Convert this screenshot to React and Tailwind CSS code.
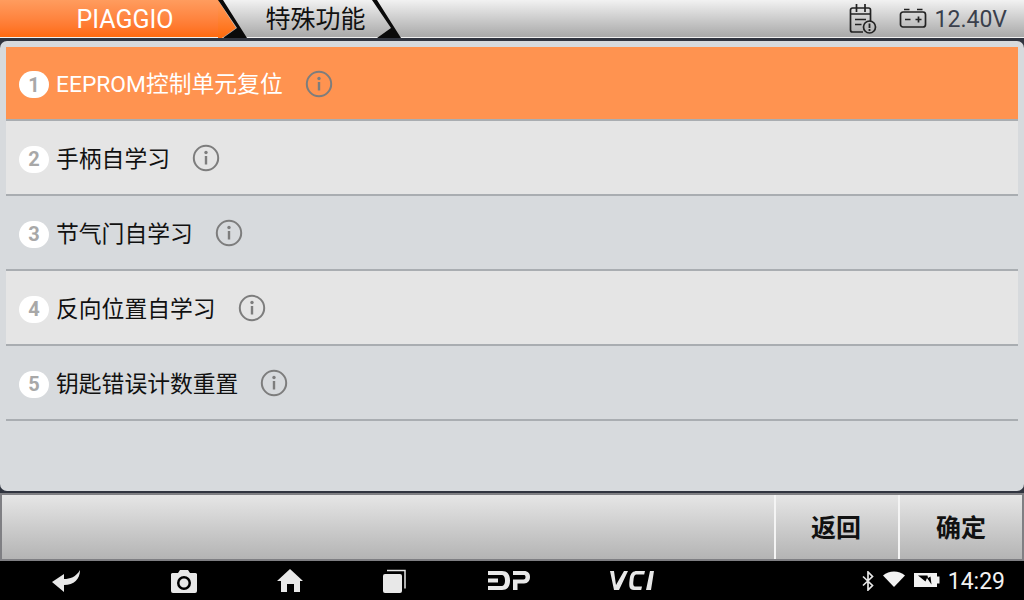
const CJK = '[font-family:Roboto,"Noto_Sans_CJK_SC",sans-serif]';

const items = [
  { label: 'EEPROM控制单元复位' },
  { label: '手柄自学习' },
  { label: '节气门自学习' },
  { label: '反向位置自学习' },
  { label: '钥匙错误计数重置' },
];

function InfoIcon() {
  return (
    <svg width="28" height="28" viewBox="0 0 28 28" className="ml-[22px] shrink-0">
      <circle cx="14" cy="14" r="12.200" fill="none" stroke="#7d7d7d" strokeWidth="2" />
      <circle cx="14" cy="8.500" r="1.700" fill="#7d7d7d" />
      <path d="M14 12v8.500" fill="none" stroke="#7d7d7d" strokeWidth="2.400" />
    </svg>
  );
}

function TabEdge() {
  return (
    <svg width="30" height="38" viewBox="0 0 30 38" className="absolute top-0 -right-[29px]">
      <path d="M0 0h5L29 38H5L19 28Z" fill="#0a0a0a" />
    </svg>
  );
}

function Row({ index, label, active }) {
  let colors = 'bg-[#e5e5e5] text-[#111]';
  if (active) colors = 'bg-[#ff9350] text-white';
  else if (index % 2 === 0) colors = 'text-[#111]';
  return (
    <div
      className={`${index === 0 ? 'h-[74px]' : 'h-[75px]'} pt-px flex items-center pl-[13px] border-b-2 border-[#a9adb1] ${colors}`}
    >
      <span className="mt-[2px] w-[30px] h-[27px] rounded-full bg-white flex items-center justify-center text-[#a8a8a8] text-[20px] font-bold [font-family:Roboto,sans-serif] shrink-0">
        {index + 1}
      </span>
      <span className={`ml-[7px] pt-[4px] text-[22.800px] leading-none whitespace-nowrap ${CJK}`}>{label}</span>
      <InfoIcon />
    </div>
  );
}

export default function App() {
  return (
    <div className="w-[1024px] h-[600px] overflow-hidden flex flex-col bg-[#30343f]">
      {/* top bar */}
      <header className="h-[38px] flex shrink-0 bg-gradient-to-b from-[#f2f2f2] to-[#a9a9a9] border-b border-[#f0f0f0]">
        <div className="relative w-[219px] bg-gradient-to-b from-[#ff9c5e] to-[#ff6a0c] flex items-center justify-center pl-[31px] pt-[3px]">
          <span className="text-white text-[25px] [font-family:Roboto,sans-serif]">PIAGGIO</span>
          <svg width="20" height="38" viewBox="0 0 20 38" className="absolute top-0 -right-[19px]">
            <defs>
              <linearGradient id="orange" x1="0" y1="0" x2="0" y2="1">
                <stop offset="0" stopColor="#ff9c5e" />
                <stop offset="1" stopColor="#ff6a0c" />
              </linearGradient>
            </defs>
            <path d="M0 0L18 28L4 38H0Z" fill="url(#orange)" />
          </svg>
          <TabEdge />
        </div>
        <div className={`relative w-[154px] flex items-center justify-center pl-[39px] pt-[3px] text-[25px] text-[#111] ${CJK}`}>
          <span className="whitespace-nowrap">特殊功能</span>
          <TabEdge />
        </div>
        <div className="ml-auto flex items-center pr-[17px]">
          <svg width="28" height="30" viewBox="0 0 28 30" className="mr-[22px]">
            <g fill="none" stroke="#222" strokeWidth="1.700">
              <path d="M14 28H3.500a2 2 0 0 1-2-2V6a2 2 0 0 1 2-2h16a2 2 0 0 1 2 2v12" />
              <path d="M7.500 0v8M16 0v8M1.500 10h20M6 15.500h11M6 20.500h6.500" />
              <circle cx="20.500" cy="23" r="6" />
            </g>
            <path d="M20.500 19.500v4.500M20.500 25v2" stroke="#222" strokeWidth="1.800" />
          </svg>
          <svg width="28" height="20" viewBox="0 0 28 20" className="mr-[8px] mb-[2px]">
            <g fill="none" stroke="#222" strokeWidth="1.700">
              <rect x="1.500" y="4" width="25" height="15" rx="2.500" />
              <path d="M5 1.500h5.500M18 1.500h5.500M6 11.500h5.500M16.500 11.500h6M19.500 8.500v6" />
            </g>
          </svg>
          <span className="pt-[3px] text-[23px] text-[#3a3f4c] [font-family:Roboto,sans-serif]">12.40V</span>
        </div>
      </header>

      {/* list panel */}
      <main className="mt-[3px] h-[450px] shrink-0 bg-[#d7dadd] rounded-[7px] px-[6px] pt-[6px]">
        {items.map((item, i) => (
          <Row key={item.label} index={i} label={item.label} active={i === 0} />
        ))}
      </main>

      {/* action bar */}
      <div className="mt-[2px] h-[68px] shrink-0 flex justify-end border-y-2 border-x-2 border-[#7f7f83] bg-gradient-to-b from-[#e6e6e6] to-[#b4b4b4]">
        <button className={`w-[124px] pt-[3px] pr-[2px] border-l-2 border-[#f4f4f4] text-[25px] font-bold text-[#111] ${CJK}`}>返回</button>
        <button className={`w-[124px] pt-[3px] border-l-2 border-[#f4f4f4] text-[25px] font-bold text-[#111] ${CJK}`}>确定</button>
      </div>

      {/* android nav bar */}
      <nav className="h-[39px] shrink-0 bg-black relative flex items-center text-[#e8e8e8]">
        <svg width="30" height="24" viewBox="0 0 30 24" className="ml-[52px]">
          <path d="M0 13L12 5v5c6 0 12-2 16-9 0 9-6 15-16 15v7Z" fill="#e8e8e8" />
        </svg>
        <svg width="26" height="24" viewBox="0 0 26 24" className="ml-[89px]">
          <path fillRule="evenodd" d="M2 4h5l2-3h8l2 3h5a2 2 0 0 1 2 1v17a2 2 0 0 1-2 2H2a2 2 0 0 1-2-2V5a2 2 0 0 1 2-1ZM13 7a7 7 0 1 0 0 14 7 7 0 0 0 0-14Zm0 2.500a4.500 4.500 0 1 1 0 9 4.500 4.500 0 0 1 0-9Z" fill="#e8e8e8" />
        </svg>
        <svg width="26" height="24" viewBox="0 0 26 24" className="ml-[80px]">
          <path d="M13 0L26 12h-3v11h-6v-8H10v8H4V12H0Z" fill="#e8e8e8" />
        </svg>
        <svg width="24" height="24" viewBox="0 0 24 24" className="ml-[80px]">
          <rect x="0" y="5" width="19" height="19" rx="2" fill="#e8e8e8" />
          <path d="M4 1.500h18v18" fill="none" stroke="#e8e8e8" strokeWidth="1.500" />
        </svg>
        <svg width="42" height="19" viewBox="0 0 42 19" className="ml-[81px]">
          <path d="M0 0h14c5 0 8 3 8 9.500S19 19 14 19H0v-4h13c3 0 4-2 4-5.500S16 4 13 4H0ZM0 7.500h10v4H0ZM25 0h11c4 0 6 2.500 6 6s-2 6.500-6 6.500h-6.500V19H25V8.500h10.500c1.500 0 2-1 2-2.500s-.500-2-2-2H25Z" fill="#e8e8e8" />
        </svg>
        <svg width="45" height="19" viewBox="0 0 45 19" className="ml-[79px]">
          <path d="M1 0h4l2 14L15 0h4L10 19H5Z M21 6c1-4 3-6 7-6h8l-.800 3.500H28c-2.500 0-3 1.500-3.500 5.500s-.500 6.500 2 6.500h6.500l-.800 3.500H25c-5 0-5.500-4-4-13Z M41 0h4l-3 19h-5Z" fill="#e8e8e8" />
        </svg>
        <div className="ml-auto flex items-center pr-[19px]">
          <svg width="12" height="20" viewBox="0 0 12 20" className="mr-[9px]">
            <path d="M1 5.500l9.500 9L6 19V1l4.500 4.500L1 14.500" fill="none" stroke="#e8e8e8" strokeWidth="1.700" />
          </svg>
          <svg width="22" height="16" viewBox="0 0 22 16" className="mr-[9px] mb-[4px]">
            <path d="M0 4.500C6-1 16-1 22 4.500L11 16Z" fill="#f2f2f2" />
          </svg>
          <svg width="26" height="14" viewBox="0 0 26 14" className="mr-[8px] mb-[1px]">
            <path fillRule="evenodd" d="M0 0h23v3.500h2.500v7H23V14H0ZM4 2.500l7.500 6 1.500-3.500 4.500 6.500-1-8-2.500 1.500-.500-2.500Z" fill="#f2f2f2" />
          </svg>
          <span className="pt-[3px] text-[23px] text-[#f2f2f2] [font-family:Roboto,sans-serif]">14:29</span>
        </div>
      </nav>
    </div>
  );
}
